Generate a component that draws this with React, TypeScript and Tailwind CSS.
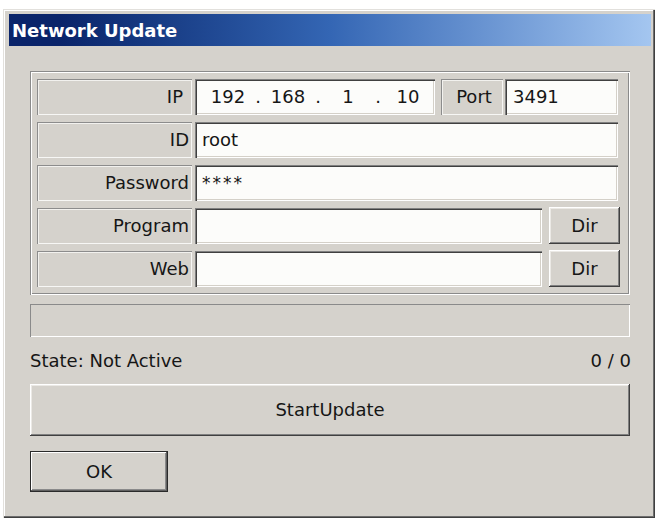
import React from "react";

// Classic 3D bevels used throughout the dialog
const raised =
  "shadow-[inset_-1px_-1px_0_#404040,inset_1px_1px_0_#ffffff,inset_-2px_-2px_0_#808080,inset_2px_2px_0_#ebe9e5]";
const sunkenField =
  "shadow-[inset_1px_1px_0_#808080,inset_2px_2px_0_#404040,inset_-1px_-1px_0_#ffffff,inset_-2px_-2px_0_#d4d0c8]";
const etched =
  "shadow-[inset_1px_1px_0_#8a8a8a,inset_2px_2px_0_#ffffff,inset_-1px_-1px_0_#ffffff,inset_-2px_-2px_0_#8a8a8a]";
const staticEdge =
  "shadow-[inset_1px_1px_0_#8c8c8c,inset_2px_2px_0_#f2f1ee,inset_-1px_-1px_0_#f7f7f5]";
const thinSunken =
  "shadow-[inset_1px_1px_0_#8a8a8a,inset_-1px_-1px_0_#ffffff]";

function Label({ text, extra = "pr-[3px]" }: { text: string; extra?: string }) {
  return (
    <div
      className={`w-[155px] h-full flex items-center justify-end bg-[#d5d2cc] ${staticEdge} ${extra}`}
    >
      {text}
    </div>
  );
}

function Field({ children, extra = "" }: { children?: React.ReactNode; extra?: string }) {
  return (
    <div className={`h-full flex items-center bg-[#fcfcfa] pl-[7px] ${sunkenField} ${extra}`}>
      {children}
    </div>
  );
}

function DirButton() {
  return (
    <div
      className={`w-[71px] h-[37px] -mt-[1px] flex items-center justify-center bg-[#d5d2cc] ${raised}`}
    >
      Dir
    </div>
  );
}

export default function App() {
  return (
    <div className="w-[656px] h-[520px] bg-white pt-[9px] pl-[3px] font-['DejaVu_Sans',sans-serif] text-[18px] leading-none text-[#161616]">
      <div
        className={`w-[652px] h-[509px] bg-[#d5d2cc] pl-[6px] pr-[4px] pt-[5px] shadow-[inset_1px_1px_0_#e2e0dc,inset_-1px_-1px_0_#404040,inset_-2px_-2px_0_#6e6e6e,inset_2px_2px_0_#ffffff]`}
      >
        {/* Title bar */}
        <div className="h-[32px] flex items-center pl-[3px] pt-[2px] bg-gradient-to-r from-[#0a246a] from-[8%] via-[#3466b4] to-[#a4c6f0] text-white font-bold">
          Network Update
        </div>

        <div className="px-[21px] pt-[25px]">
          {/* Connection settings group */}
          <div className={`pt-[8px] pb-[8px] pl-[7px] pr-[10px] flex flex-col gap-[7px] ${etched}`}>
            <div className="flex h-[36px]">
              <Label text="IP" extra="pr-[9px]" />
              <Field extra="w-[240px] ml-[3px] pl-[9px]">
                <span className="w-[48px] text-center">192</span>
                <span className="w-[12px] text-center">.</span>
                <span className="w-[48px] text-center">168</span>
                <span className="w-[12px] text-center">.</span>
                <span className="w-[48px] text-center">1</span>
                <span className="w-[12px] text-center">.</span>
                <span className="w-[48px] text-center">10</span>
              </Field>
              <div
                className={`w-[62px] ml-[6px] h-full flex items-center justify-center pl-[4px] bg-[#d5d2cc] ${staticEdge}`}
              >
                Port
              </div>
              <Field extra="flex-1 ml-[2px] mr-[2px] pl-[8px]">3491</Field>
            </div>

            <div className="flex h-[36px]">
              <Label text="ID" />
              <Field extra="flex-1 ml-[3px] mr-[2px]">root</Field>
            </div>

            <div className="flex h-[36px]">
              <Label text="Password" />
              <Field extra="flex-1 ml-[3px] mr-[2px] items-start pt-[10px]">
                <span className="text-[17px] tracking-[2px]">****</span>
              </Field>
            </div>

            <div className="flex h-[36px]">
              <Label text="Program" />
              <Field extra="flex-1 ml-[3px] mr-[7px]" />
              <DirButton />
            </div>

            <div className="flex h-[36px]">
              <Label text="Web" />
              <Field extra="flex-1 ml-[3px] mr-[7px]" />
              <DirButton />
            </div>
          </div>

          {/* Progress bar */}
          <div className={`mt-[9px] h-[33px] bg-[#d5d2cc] ${thinSunken}`} />

          {/* Status line */}
          <div className="mt-[12px] h-[24px] flex items-center justify-between">
            <span>State: Not Active</span>
            <span className="-mr-[1px]">0 / 0</span>
          </div>

          {/* Start button */}
          <div className={`mt-[11px] h-[52px] flex items-center justify-center bg-[#d5d2cc] ${raised}`}>
            StartUpdate
          </div>

          {/* Default button */}
          <div
            className={`mt-[15px] w-[138px] h-[41px] flex items-center justify-center border border-[#2a2a2a] bg-[#d5d2cc] shadow-[inset_-1px_-1px_0_#606060,inset_1px_1px_0_#ffffff,inset_-2px_-2px_0_#8a8a8a]`}
          >
            OK
          </div>
        </div>
      </div>
    </div>
  );
}
